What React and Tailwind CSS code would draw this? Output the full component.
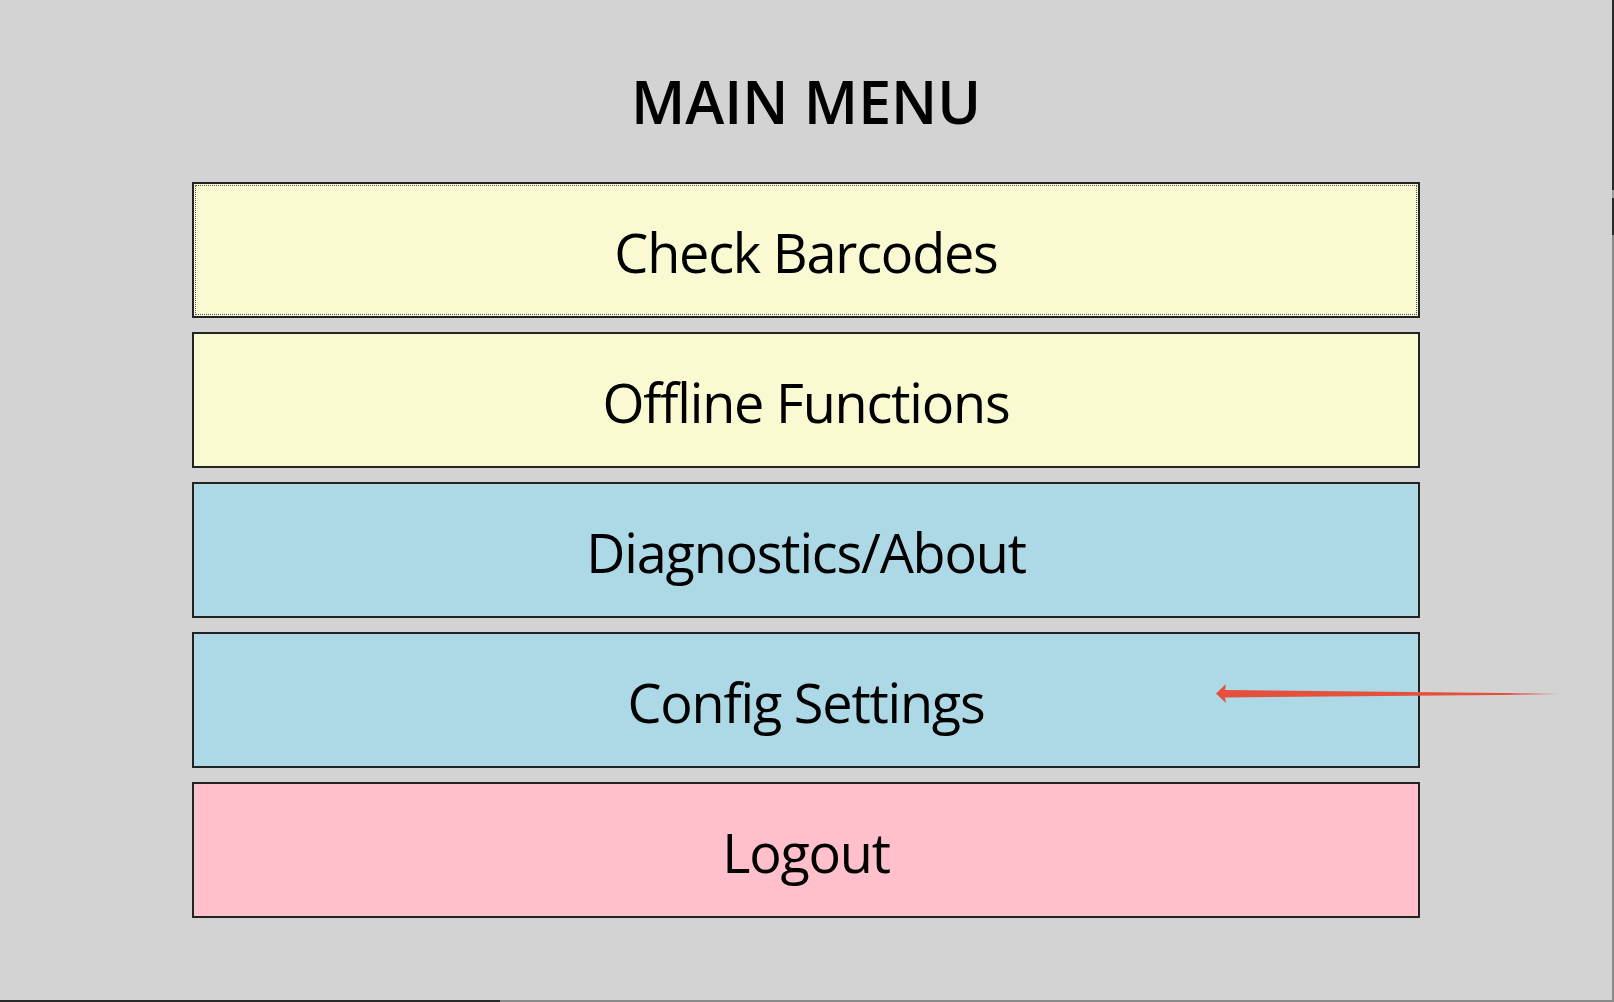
const items = [
  { label: 'Check Barcodes', color: 'bg-[#fafad2]', focused: true },
  { label: 'Offline Functions', color: 'bg-[#fafad2]' },
  { label: 'Diagnostics/About', color: 'bg-[#add8e6]' },
  { label: 'Config Settings', color: 'bg-[#add8e6]' },
  { label: 'Logout', color: 'bg-[#ffc0cb]' },
];

function Arrow() {
  return (
    <svg className="pointer-events-none absolute left-0 top-0" width="1614" height="1002" viewBox="0 0 1614 1002">
      <defs>
        <linearGradient id="fade" x1="1216" y1="0" x2="1562" y2="0" gradientUnits="userSpaceOnUse">
          <stop offset="0" stopColor="#e5503c" />
          <stop offset="0.85" stopColor="#e5503c" />
          <stop offset="1" stopColor="#e5503c" stopOpacity="0" />
        </linearGradient>
      </defs>
      <polygon
        points="1216,693.5 1226,684 1225,690 1562,693.5 1562,694.5 1225,697.5 1226,703"
        fill="url(#fade)"
      />
    </svg>
  );
}

export default function App() {
  return (
    <div
      className="relative flex h-[1002px] w-[1614px] flex-col overflow-hidden bg-[#d3d3d3] text-black"
      style={{ fontFamily: '"Open Sans", "Noto Sans", sans-serif' }}
    >
      <div className="flex flex-1">
        <main className="flex flex-1 flex-col items-center">
          <h1 className="mt-[72px] text-[59px] font-semibold leading-none">MAIN MENU</h1>
          <div className="mt-[51px] flex w-[1228px] flex-col gap-[14px]">
            {items.map((item) => (
              <button
                key={item.label}
                type="button"
                className={`flex h-[136px] items-center justify-center border-2 border-[#222] pt-1 text-[54px] leading-none tracking-[-1.2px] ${item.color} ${
                  item.focused ? 'outline-1 outline-dotted outline-[#555] outline-offset-[-4px]' : ''
                }`}
              >
                {item.label}
              </button>
            ))}
          </div>
        </main>
        <div className="flex w-[2px] flex-col">
          <div className="h-[190px] bg-[#2a2a2a]" />
          <div className="h-[8px] bg-[#9a9a9a]" />
          <div className="h-[37px] bg-[#2a2a2a]" />
          <div className="flex-1 bg-[#8a8a8a]" />
        </div>
      </div>
      <div className="flex h-[2px]">
        <div className="w-[500px] bg-[#2a2a2a]" />
        <div className="flex-1 bg-[#8a8a8a]" />
      </div>
      <Arrow />
    </div>
  );
}
